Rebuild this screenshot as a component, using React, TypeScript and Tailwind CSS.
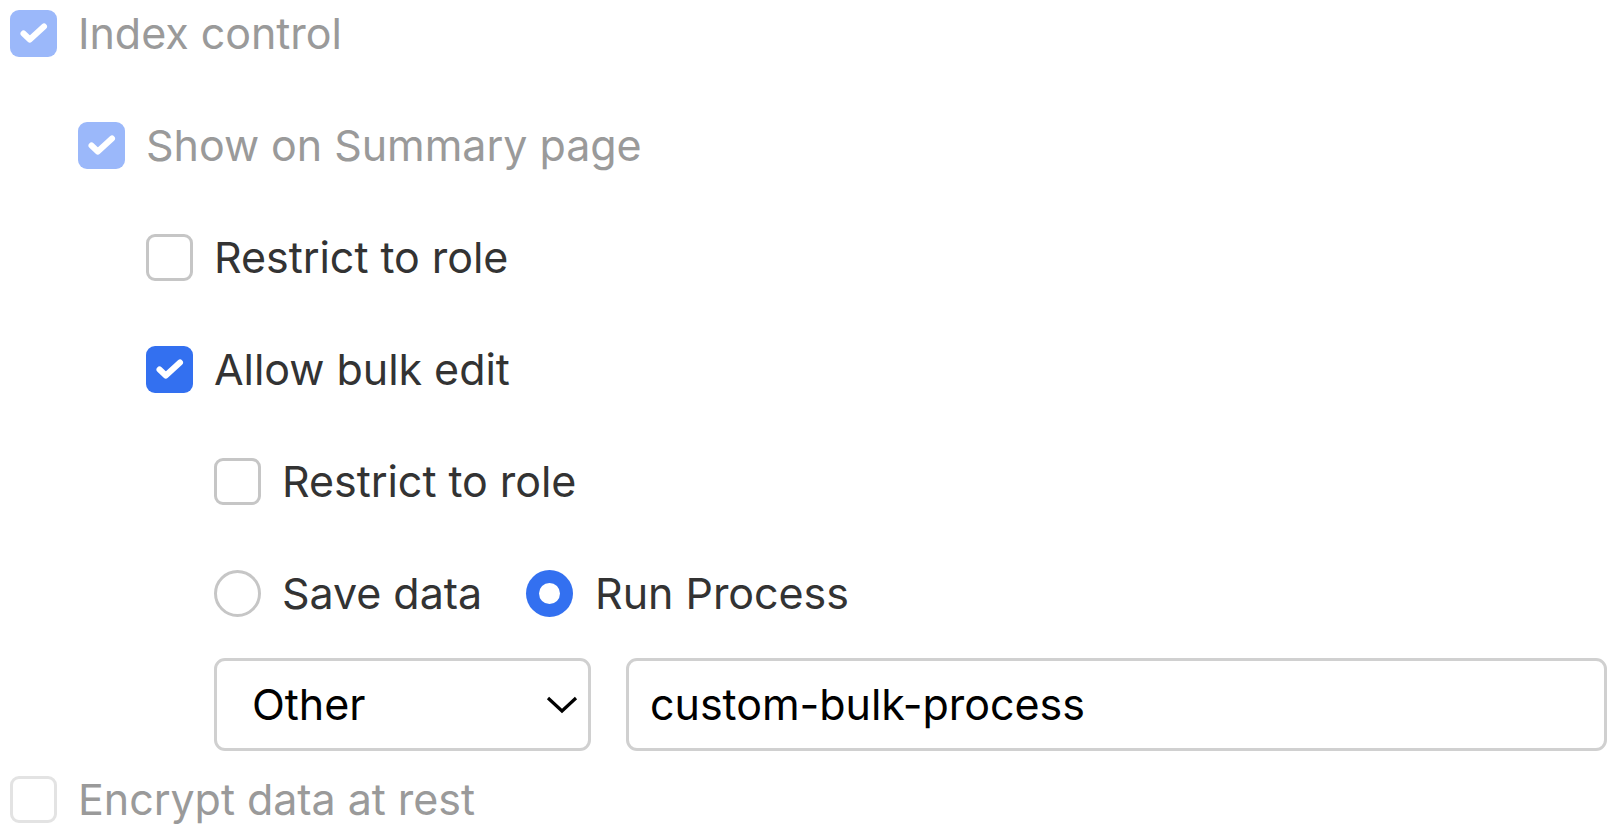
import React from 'react';

type BoxProps = { checked?: boolean; disabled?: boolean };

const Check = () => (
  <svg viewBox="0 0 47 47" className="w-full h-full">
    <path d="M13.5 23.5 L19.8 29.5 L34 16.5" fill="none" stroke="white" strokeWidth="6" strokeLinecap="round" strokeLinejoin="round" />
  </svg>
);

const Checkbox: React.FC<BoxProps> = ({ checked, disabled }) => {
  if (checked) {
    return (
      <div className={`w-[47px] h-[47px] shrink-0 rounded-[9px] ${disabled ? 'bg-[#9bb8fa]' : 'bg-[#3370f0]'}`}>
        <Check />
      </div>
    );
  }
  return (
    <div
      className={`w-[47px] h-[47px] shrink-0 rounded-[9px] border-[3px] bg-white ${disabled ? 'border-[#e3e3e3]' : 'border-[#c6c6c6]'}`}
    />
  );
};

const Radio: React.FC<{ checked?: boolean }> = ({ checked }) =>
  checked ? (
    <div className="w-[47px] h-[47px] shrink-0 rounded-full bg-[#3370f0] flex items-center justify-center">
      <div className="w-[21px] h-[21px] rounded-full bg-white" />
    </div>
  ) : (
    <div className="w-[47px] h-[47px] shrink-0 rounded-full border-[3px] border-[#c6c6c6] bg-white" />
  );

const Row: React.FC<BoxProps & { label: string; indent: string }> = ({ label, indent, checked, disabled }) => (
  <div className={`flex items-center gap-[21px] h-[47px] ${indent}`}>
    <Checkbox checked={checked} disabled={disabled} />
    <span className={`text-[43px] leading-none ${disabled ? 'text-[#9a9a9a]' : 'text-[#333333]'}`}>{label}</span>
  </div>
);

export default function App() {
  return (
    <div className="bg-white min-h-screen pt-[10px] pl-[10px] pr-[11px] font-['Inter',sans-serif] tracking-[-0.003em]">
      <div className="flex flex-col gap-[65px]">
        <Row label="Index control" indent="" checked disabled />
        <Row label="Show on Summary page" indent="ml-[68px]" checked disabled />
        <Row label="Restrict to role" indent="ml-[136px]" />
        <Row label="Allow bulk edit" indent="ml-[136px]" checked />
        <Row label="Restrict to role" indent="ml-[204px]" />
        <div className="flex items-center h-[47px] ml-[204px]">
          <Radio />
          <span className="ml-[21px] text-[43px] leading-none text-[#333333]">Save data</span>
          <div className="ml-[44px]">
            <Radio checked />
          </div>
          <span className="ml-[22px] text-[43px] leading-none text-[#333333]">Run Process</span>
        </div>
      </div>
      <div className="flex items-center gap-[35px] ml-[204px] mt-[41px]">
        <div className="w-[377px] h-[93px] shrink-0 rounded-[11px] border-[3px] border-[#d0d0d0] flex items-center justify-between pl-[35px] pr-[9px]">
          <span className="text-[43px] leading-none text-black">Other</span>
          <svg viewBox="0 0 34 20" className="w-[34px] h-[20px]">
            <path d="M3 3 L17 16 L31 3" fill="none" stroke="black" strokeWidth="3.2" />
          </svg>
        </div>
        <div className="flex-1 h-[93px] rounded-[11px] border-[3px] border-[#d0d0d0] flex items-center pl-[21px]">
          <span className="text-[43px] leading-none text-black">custom-bulk-process</span>
        </div>
      </div>
      <div className="mt-[25px]">
        <Row label="Encrypt data at rest" indent="" disabled />
      </div>
    </div>
  );
}
